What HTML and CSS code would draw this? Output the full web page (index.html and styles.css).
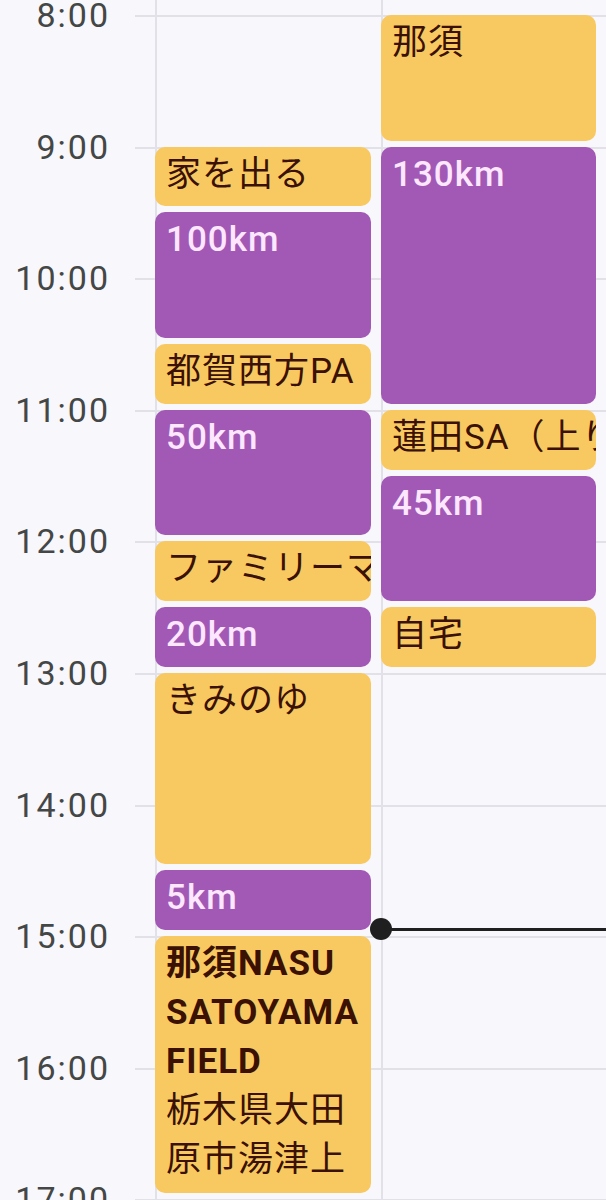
FILE: index.html
```html
<!DOCTYPE html>
<html lang="ja">
<head>
  <meta charset="UTF-8">
  <meta name="viewport" content="width=device-width, initial-scale=1.0">
  <title>カレンダー</title>
  <link rel="stylesheet" href="styles.css">
</head>
<body>
  <div class="calendar">
    <div class="hours">
      <div class="hour"><span class="label">8:00</span><span class="rule"></span></div>
      <div class="hour"><span class="label">9:00</span><span class="rule"></span></div>
      <div class="hour"><span class="label">10:00</span><span class="rule"></span></div>
      <div class="hour"><span class="label">11:00</span><span class="rule"></span></div>
      <div class="hour"><span class="label">12:00</span><span class="rule"></span></div>
      <div class="hour"><span class="label">13:00</span><span class="rule"></span></div>
      <div class="hour"><span class="label">14:00</span><span class="rule"></span></div>
      <div class="hour"><span class="label">15:00</span><span class="rule"></span></div>
      <div class="hour"><span class="label">16:00</span><span class="rule"></span></div>
      <div class="hour"><span class="label">17:00</span><span class="rule"></span></div>
    </div>

    <div class="days">
      <div class="day from-9">
        <div class="event place d30">家を出る</div>
        <div class="event drive d60">100km</div>
        <div class="event place d30">都賀西方PA</div>
        <div class="event drive d60">50km</div>
        <div class="event place d30">ファミリーマート</div>
        <div class="event drive d30">20km</div>
        <div class="event place d90">きみのゆ</div>
        <div class="event drive d30">5km</div>
        <div class="event place d120 wrap">
          <div class="title">那須NASU SATOYAMA FIELD</div>
          <div class="where">栃木県大田原市湯津上</div>
        </div>
      </div>

      <div class="day today">
        <div class="event place d60">那須</div>
        <div class="event drive d120">130km</div>
        <div class="event place d30">蓮田SA（上り）</div>
        <div class="event drive d60">45km</div>
        <div class="event place d30">自宅</div>

        <!-- current time -->
        <div class="now"><span class="dot"></span><span class="now-line"></span></div>
      </div>
    </div>
  </div>
</body>
</html>
```

FILE: styles.css
```css
:root {
  --hour: 131.6px;
  --grid: #e3e1e8;
}
body {
  margin: 0;
  height: 1200px;
  overflow: hidden;
  background-color: #f8f7fc;
  font-family: Roboto, "Noto Sans CJK JP", sans-serif;
}
.calendar {
  display: grid;
}
.hours, .days {
  grid-area: 1 / 1;
}
.hours {
  padding-top: 15px;
}
.hour {
  display: grid;
  grid-template-columns: 135px 1fr;
  height: var(--hour);
}
.label {
  align-self: start;
  font-size: 34px;
  line-height: 34px;
  letter-spacing: 2px;
  color: #444746;
  text-align: right;
  padding-right: 25px;
  transform: translateY(-50%);
}
.rule {
  border-top: 2px solid var(--grid);
}

.days {
  display: grid;
  grid-template-columns: 226px minmax(0, 1fr);
  margin-left: 155px;
}
.day {
  position: relative;
  min-width: 0;
  display: flex;
  flex-direction: column;
  gap: 6px;
  padding-top: 15px;
  border-left: 2px solid var(--grid);
}
.day.from-9 {
  padding-top: calc(15px + var(--hour));
}

.event {
  flex: none;
  box-sizing: border-box;
  margin-left: -2px;
  margin-right: 10px;
  padding: 3px 4px 0 11px;
  border-radius: 10px;
  font-size: 35px;
  line-height: 49px;
  letter-spacing: 1px;
  white-space: nowrap;
  overflow: hidden;
}
.event.wrap {
  white-space: normal;
}
.title {
  font-weight: 700;
}
.place {
  background-color: #f9c961;
  color: #3b1104;
}
.drive {
  background-color: #a259b5;
  color: #fde7ff;
  font-weight: 500;
}
.d30 { height: calc(var(--hour) * 0.5 - 6px); }
.d60 { height: calc(var(--hour) - 6px); }
.d90 { height: calc(var(--hour) * 1.5 - 6px); }
.d120 { height: calc(var(--hour) * 2 - 6px); }

.now {
  position: absolute;
  top: 918px;
  left: -13px;
  right: 0;
  height: 22px;
  display: flex;
  align-items: center;
}
.dot {
  width: 22px;
  height: 22px;
  border-radius: 50%;
  background-color: #1f1f1f;
}
.now-line {
  flex: 1;
  height: 3px;
  margin-left: -2px;
  background-color: #1f1f1f;
}
```
